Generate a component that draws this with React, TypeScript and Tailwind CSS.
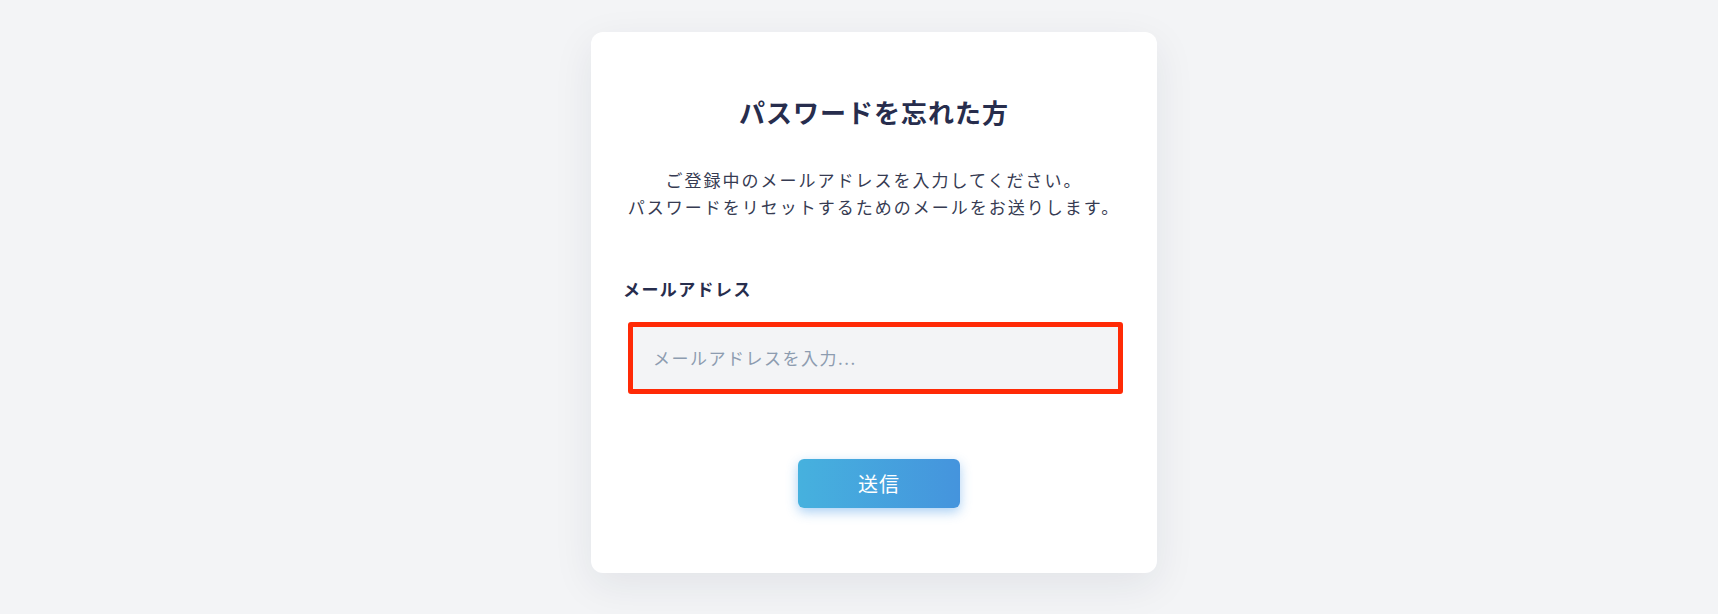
import React from "react";

export default function App() {
  return (
    <div
      className="min-h-screen w-full bg-[#f3f4f6] flex justify-center items-start pt-[32px] pl-[30px]"
      style={{ fontFamily: '"Noto Sans CJK JP", "Noto Sans", sans-serif' }}
    >
      <div className="w-[566px] bg-white rounded-[12px] shadow-[0_12px_40px_rgba(30,40,60,0.08)] px-[34px] pt-[61px] pb-[65px] flex flex-col">
        <h1 className="text-center text-[26px] leading-[38px] font-bold tracking-[1px] text-[#272d4d]">
          パスワードを忘れた方
        </h1>
        <p className="mt-[35px] text-center text-[17px] leading-[27px] tracking-[2px] text-[#363b52]">
          ご登録中のメールアドレスを入力してください。
          <br />
          パスワードをリセットするためのメールをお送りします。
        </p>
        <label className="mt-[57px] -ml-[2px] text-[17px] leading-[24px] font-bold tracking-[1.4px] text-[#272d4d]">
          メールアドレス
        </label>
        <div className="mt-[21px] ml-[3px] h-[72px] rounded-[3px] border-[5px] border-[#ff2a06] bg-[#f3f4f6] flex items-center pl-[20px]">
          <input
            type="email"
            placeholder="メールアドレスを入力..."
            className="w-full bg-transparent outline-none text-[17px] tracking-[1.5px] text-[#363b52] placeholder:text-[#8d9cb0]"
            style={{ fontFamily: '"Noto Sans CJK JP", "Noto Sans", sans-serif' }}
          />
        </div>
        <div className="mt-[65px] flex justify-center pl-[10px]">
          <button
            type="button"
            className="w-[162px] h-[49px] rounded-[6px] bg-gradient-to-r from-[#46b1de] to-[#4594dd] text-white text-[20px] tracking-[1px] shadow-[0_4px_12px_rgba(66,150,230,0.45)] flex items-center justify-center"
            style={{ fontFamily: '"Noto Sans CJK JP", "Noto Sans", sans-serif' }}
          >
            送信
          </button>
        </div>
      </div>
    </div>
  );
}
